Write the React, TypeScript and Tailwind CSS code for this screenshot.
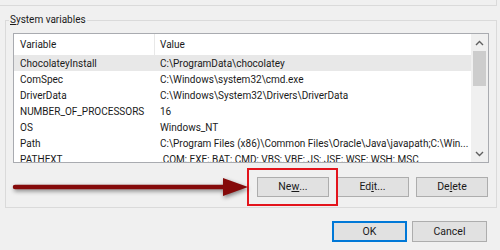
import type { ReactNode } from 'react';

const ROWS: [string, string][] = [
  ['ChocolateyInstall', 'C:\\ProgramData\\chocolatey'],
  ['ComSpec', 'C:\\Windows\\system32\\cmd.exe'],
  ['DriverData', 'C:\\Windows\\System32\\Drivers\\DriverData'],
  ['NUMBER_OF_PROCESSORS', '16'],
  ['OS', 'Windows_NT'],
  ['Path', 'C:\\Program Files (x86)\\Common Files\\Oracle\\Java\\javapath;C:\\Win...'],
  ['PATHEXT', '.COM;.EXE;.BAT;.CMD;.VBS;.VBE;.JS;.JSE;.WSF;.WSH;.MSC'],
];

function WinButton({ children, primary = false, w = 'w-[72px] h-[20px]' }: { children: ReactNode; primary?: boolean; w?: string }) {
  return (
    <div
      className={`${w} flex items-center justify-center bg-[#e1e1e1] text-[10.5px] text-[#1a1a1a] border ${
        primary ? 'border-[#0078d7] shadow-[inset_0_0_0_1px_#0078d7]' : 'border-[#adadad]'
      }`}
    >
      {children}
    </div>
  );
}

function ScrollArrow({ down = false }: { down?: boolean }) {
  return (
    <div className="h-[17px] flex items-center justify-center">
      <svg width="9" height="6" viewBox="0 0 9 6" className={down ? 'rotate-180' : ''}>
        <path d="M1 5 L4.5 1.5 L8 5" fill="none" stroke="#606060" strokeWidth="1.4" />
      </svg>
    </div>
  );
}

export default function App() {
  return (
    <div
      className="relative w-[500px] h-[250px] overflow-hidden bg-[#f0f0f0] text-[#1a1a1a]"
      style={{ fontFamily: 'Roboto, "Noto Sans", sans-serif' }}
    >
      {/* previous group box edge */}
      <div className="h-[6px] mr-[3px] border-b border-r border-[#dadada]" />

      {/* System variables group */}
      <div className="relative mt-[14px] ml-[5px] mr-[3px] h-[188px] border border-[#dadada] flex flex-col">
        <div className="absolute -top-[10px] left-[3px] px-[1px] bg-[#f0f0f0] text-[10px] leading-[18px]">
          <span className="underline">S</span>ystem variables
        </div>

        <div className="mt-[12px] ml-[7px] mr-[7px] h-[130px] border border-[#a9abb0] bg-white flex overflow-hidden">
          <div className="flex-1 flex flex-col text-[10px] min-w-0">
            <div className="h-[21px] flex shrink-0">
              <div className="w-[141px] pl-[6px] flex items-center border-r border-[#e8e8e8]">Variable</div>
              <div className="flex-1 pl-[5px] flex items-center">Value</div>
            </div>
            {ROWS.map(([name, value], i) => (
              <div key={name} className={`h-[16px] flex shrink-0 items-center ${i === 0 ? 'bg-[#e8e8e8]' : ''}`}>
                <div className="w-[141px] pl-[6px] whitespace-nowrap">{name}</div>
                <div className="flex-1 pl-[5px] whitespace-nowrap overflow-hidden">{value}</div>
              </div>
            ))}
          </div>
          <div className="w-[17px] bg-[#f0f0f0] flex flex-col">
            <ScrollArrow />
            <div className="mx-[2px] h-[35px] bg-[#cdcdcd]" />
            <div className="flex-1" />
            <ScrollArrow down />
          </div>
        </div>

        <div className="mt-[14px] mr-[8px] flex justify-end gap-[7px]">
          <WinButton>
            Ne<span className="underline">w</span>...
          </WinButton>
          <WinButton w="w-[73px] h-[20px]">
            Ed<span className="underline">i</span>t...
          </WinButton>
          <WinButton>
            De<span className="underline">l</span>ete
          </WinButton>
        </div>
      </div>

      {/* dialog buttons */}
      <div className="mt-[13px] mr-[13px] flex justify-end gap-[5px]">
        <WinButton primary w="w-[75px] h-[21px]">OK</WinButton>
        <WinButton w="w-[75px] h-[21px]">Cancel</WinButton>
      </div>

      {/* annotation: highlight box */}
      <div className="absolute left-[247px] top-[168px] w-[91px] h-[38px] border-2 border-[#e3141c]" />

      {/* annotation: arrow */}
      <svg
        className="absolute left-0 top-[174px] drop-shadow-[1px_2px_2px_rgba(0,0,0,0.45)]"
        width="252"
        height="28"
        viewBox="0 0 252 28"
      >
        <line x1="15" y1="13" x2="228" y2="13" stroke="#850b0b" strokeWidth="4.5" strokeLinecap="round" />
        <path d="M223 4 L248 13 L223 22 Z" fill="#850b0b" />
      </svg>
    </div>
  );
}
